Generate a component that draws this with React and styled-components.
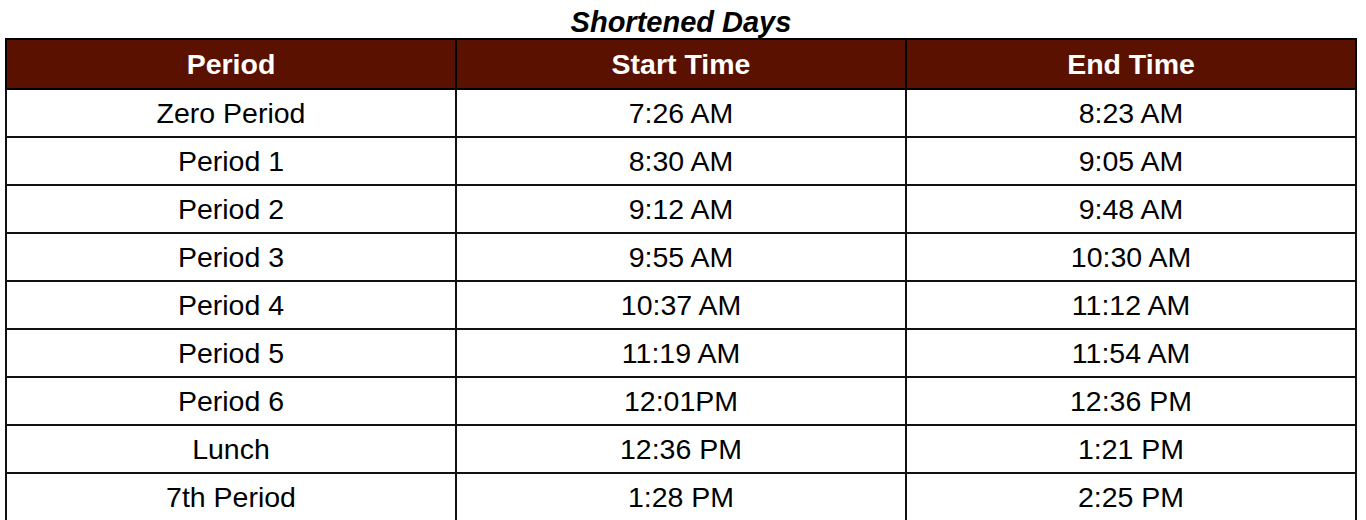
import React from 'react';
import styled, { createGlobalStyle } from 'styled-components';

const rows = [
  ['Zero Period', '7:26 AM', '8:23 AM'],
  ['Period 1', '8:30 AM', '9:05 AM'],
  ['Period 2', '9:12 AM', '9:48 AM'],
  ['Period 3', '9:55 AM', '10:30 AM'],
  ['Period 4', '10:37 AM', '11:12 AM'],
  ['Period 5', '11:19 AM', '11:54 AM'],
  ['Period 6', '12:01PM', '12:36 PM'],
  ['Lunch', '12:36 PM', '1:21 PM'],
  ['7th Period', '1:28 PM', '2:25 PM'],
];

const GlobalStyle = createGlobalStyle`
  body {
    margin: 0;
    background: #ffffff;
    font-family: "Liberation Sans", Arial, sans-serif;
    color: #000000;
  }
`;

const Page = styled.main`
  width: 1366px;
  padding: 0 0 0 5px;
  box-sizing: border-box;
`;

const Title = styled.h1`
  width: 1352px;
  height: 38px;
  margin: 0;
  padding-top: 6px;
  box-sizing: border-box;
  text-align: center;
  font-size: 29px;
  line-height: 32px;
  font-weight: 700;
  font-style: italic;
`;

const Table = styled.table`
  width: 1352px;
  border-collapse: collapse;
  table-layout: fixed;
  border: 2px solid #000;
`;

const HeadCell = styled.th`
  height: 48px;
  padding: 0;
  background: #5a1100;
  color: #ffffff;
  font-size: 28.5px;
  font-weight: 700;
  text-align: center;
  border: 2px solid #000;
`;

const Cell = styled.td`
  height: 46px;
  padding: 0;
  font-size: 28.5px;
  text-align: center;
  border: 2px solid #111;
`;

export default function App() {
  return (
    <Page>
      <GlobalStyle />
      <Title>Shortened Days</Title>
      <Table>
        <thead>
          <tr>
            <HeadCell>Period</HeadCell>
            <HeadCell>Start Time</HeadCell>
            <HeadCell>End Time</HeadCell>
          </tr>
        </thead>
        <tbody>
          {rows.map(([name, start, end]) => (
            <tr key={name}>
              <Cell>{name}</Cell>
              <Cell>{start}</Cell>
              <Cell>{end}</Cell>
            </tr>
          ))}
        </tbody>
      </Table>
    </Page>
  );
}
